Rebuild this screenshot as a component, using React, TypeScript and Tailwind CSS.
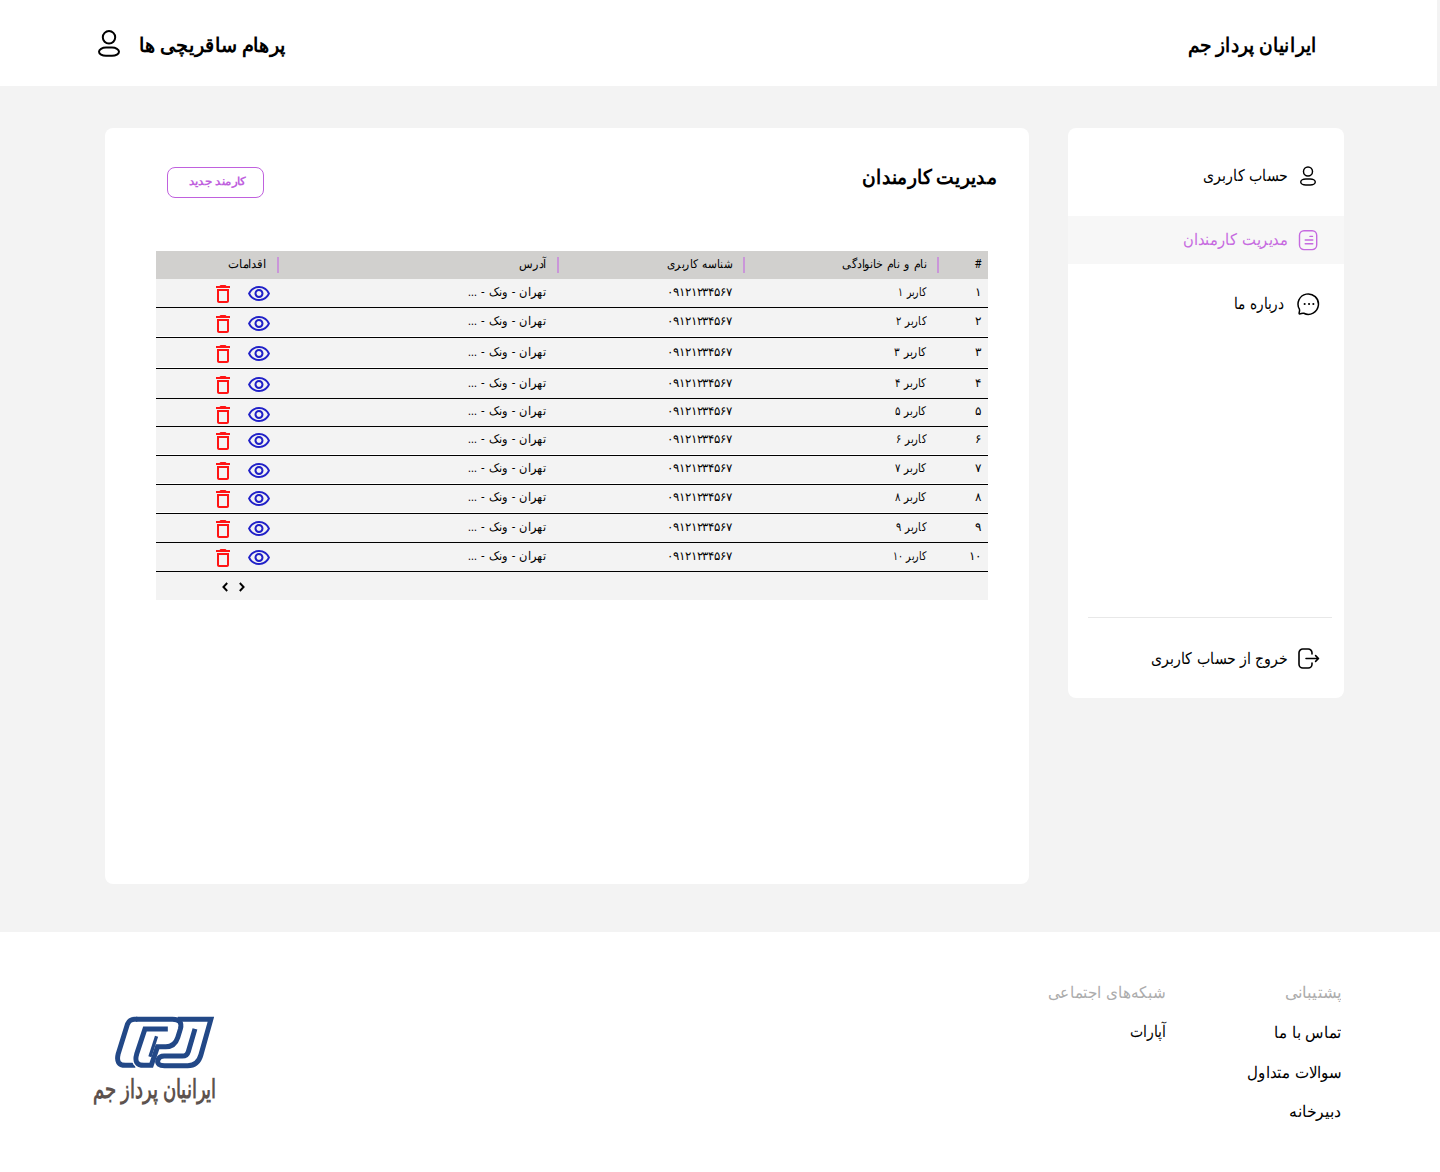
import { useLayoutEffect, useRef, useState, type ReactNode } from 'react';
import { MdDeleteOutline, MdOutlineVisibility } from 'react-icons/md';

/** A line of text that is condensed or widened to fill the width of its box. */
function Fit({ className, children }: { className: string; children: ReactNode }) {
  const outer = useRef<HTMLSpanElement>(null);
  const inner = useRef<HTMLSpanElement>(null);
  const [scale, setScale] = useState(1);
  useLayoutEffect(() => {
    if (outer.current && inner.current) {
      setScale(outer.current.offsetWidth / inner.current.getBoundingClientRect().width);
    }
  }, []);
  return (
    <span ref={outer} className={`block shrink-0 whitespace-nowrap ${className}`}>
      <span ref={inner} className="block w-max origin-right" style={{ transform: `scaleX(${scale})` }}>
        {children}
      </span>
    </span>
  );
}

function UserIcon({ className }: { className: string }) {
  return (
    <svg viewBox="0 0 22 27" fill="none" stroke="currentColor" strokeWidth="2" className={className}>
      <circle cx="11" cy="7.3" r="6.2" />
      <rect x="1" y="17.6" width="20" height="8.2" rx="7" ry="4.1" />
    </svg>
  );
}

function DocIcon() {
  return (
    <svg viewBox="0 0 20 21" fill="none" stroke="currentColor" strokeWidth="1.4" strokeLinecap="round" className="h-[21px] w-5">
      <rect x="1.5" y="0.8" width="17.2" height="18.8" rx="4.5" />
      <path d="M12 6.4h2.5M7.2 10h7.6M7.2 13.7h7.6" />
    </svg>
  );
}

function ChatIcon() {
  return (
    <svg viewBox="0 0 24 24" fill="none" stroke="currentColor" strokeWidth="1.5" strokeLinejoin="round" className="size-6">
      <path d="M2.4 17.2A10.2 10.2 0 1 1 6.8 21.3C5.3 20.6 3.9 22.2 2.4 21.9C1.3 21.6 3.2 19.2 2.4 17.2Z" />
      <path d="M7.6 12h.1M12 12h.1M16.3 12h.1" strokeWidth="2" strokeLinecap="round" />
    </svg>
  );
}

function ExitIcon() {
  return (
    <svg viewBox="0 0 22 22" fill="none" stroke="currentColor" strokeWidth="1.6" strokeLinecap="round" strokeLinejoin="round" className="size-[22px]">
      <path d="M14 6V4.8A3.8 3.8 0 0 0 10.2 1H4.8A3.8 3.8 0 0 0 1 4.8v11.4A3.8 3.8 0 0 0 4.8 20h5.4a3.8 3.8 0 0 0 3.8-3.8V15" />
      <path d="M8 10.5h12.4M17.6 7.6l2.9 2.9-2.9 2.9" />
    </svg>
  );
}

function Chevron({ d }: { d: string }) {
  return (
    <svg viewBox="0 0 6 10" fill="none" stroke="currentColor" strokeWidth="1.9" className="h-2.5 w-1.5">
      <path d={d} />
    </svg>
  );
}

function Logo() {
  return (
    <div className="flex w-[123px] flex-col">
      <svg viewBox="75 17 300 160" className="ml-[22px] h-[53px] w-[101px]" fill="none" stroke="#224887" strokeWidth="15">
        <path d="M150 27H132Q116 27 110 42L82 132Q74 166 104 166H134" />
        <path d="M140 27H246Q277 27 269 56L261 82Q253 108 226 108H201L182 166H160Q128 166 138 132L164 52H230" stroke="#fff" strokeWidth="24" />
        <path d="M314 56L294 124Q290 138 276 138H221Q206 138 202 150Q198 167 222 167H292Q323 167 332 134L362 27H262" />
        <path d="M136 27H246Q278 27 270 56L262 82Q253 110 226 110H201L182 166H160Q128 166 138 132L163 56H232" />
        <path d="M198 78L178 140" strokeWidth="10" />
      </svg>
      <div className="mt-0.5 h-9 text-[26px] leading-9 font-bold text-[#5d524e]">
        <Fit className="w-[123px]">ایرانیان پرداز جم</Fit>
      </div>
    </div>
  );
}

const rows = [
  { n: '۱', height: 'h-[29px]', text: 'mt-px', icons: 'mt-[3px]', name: 'w-7', gap: false },
  { n: '۲', height: 'h-[30px]', text: 'mt-px', icons: 'mt-1', name: 'w-[30px]', gap: true },
  { n: '۳', height: 'h-[31px]', text: 'mt-0.5', icons: 'mt-1', name: 'w-8', gap: true },
  { n: '۴', height: 'h-[30px]', text: 'mt-0.5', icons: 'mt-1', name: 'w-[31px]', gap: false },
  { n: '۵', height: 'h-7', text: 'mt-0', icons: 'mt-1', name: 'w-[31px]', gap: false },
  { n: '۶', height: 'h-[29px]', text: 'mt-0', icons: 'mt-0.5', name: 'w-[30px]', gap: true },
  { n: '۷', height: 'h-[29px]', text: 'mt-0', icons: 'mt-[3px]', name: 'w-[31px]', gap: true },
  { n: '۸', height: 'h-[29px]', text: 'mt-0', icons: 'mt-0.5', name: 'w-[31px]', gap: true },
  { n: '۹', height: 'h-[29px]', text: 'mt-px', icons: 'mt-[3px]', name: 'w-[30px]', gap: false },
  { n: '۱۰', height: 'h-[29px]', text: 'mt-px', icons: 'mt-[3px]', name: 'w-[33px]', gap: false },
];

const grid = 'grid grid-cols-[49px_194px_186px_280px_123px]';

function HeadCell({ children, width }: { children: string; width: string }) {
  return (
    <div className="flex">
      <span className="mt-1.5 h-4 w-0.5 shrink-0 bg-[#ca96d9]" />
      <Fit className={`mt-px mr-[11px] ${width}`}>{children}</Fit>
    </div>
  );
}

function Employees() {
  return (
    <main className="h-[756px] w-[924px] rounded-lg bg-white">
      <div className="flex h-[123px] items-start justify-between pr-8 pl-[62px]">
        <h1 className="mt-[33px] text-xl leading-8 font-bold">
          <Fit className="w-[135px]">مدیریت کارمندان</Fit>
        </h1>
        <button className="mt-[39px] flex h-[31px] w-[97px] rounded-lg border border-[#c061de] pr-[17px] text-[11px] leading-7 font-bold text-[#c061de]">
          <Fit className="w-[57px]">کارمند جدید</Fit>
        </button>
      </div>

      <div className="mr-[41px] w-[832px] text-xs leading-6 [word-spacing:1.5px]">
        <div className={`h-7 bg-[#d1d0ce] ${grid}`}>
          <Fit className="mt-px mr-[7px] w-[7px]">#</Fit>
          <HeadCell width="w-[84px]">نام و نام خانوادگی</HeadCell>
          <HeadCell width="w-[65px]">شناسه کاربری</HeadCell>
          <HeadCell width="w-[27px]">آدرس</HeadCell>
          <HeadCell width="w-[38px]">اقدامات</HeadCell>
        </div>
        {rows.map((r) => (
          <div key={r.n} className={`border-b border-black ${r.height}`}>
            <div className={`bg-[#f3f3f3] ${grid} ${r.gap ? 'h-[calc(100%-1px)]' : 'h-full'}`}>
              <span className={`mr-[7px] tracking-[-1.5px] ${r.text}`}>{r.n}</span>
              <Fit className={`mr-[13px] ${r.name} ${r.text}`}>کاربر {r.n}</Fit>
              <Fit className={`mr-[13px] w-[65px] ${r.text}`}>۰۹۱۲۱۲۳۴۵۶۷</Fit>
              <Fit className={`mr-[13px] w-[78px] ${r.text}`}>تهران - ونک - ...</Fit>
              <div className={`mr-2 flex h-6 gap-3 ${r.icons}`}>
                <MdOutlineVisibility className="-mt-[0.5px] size-6 shrink-0 text-[#2020c8]" />
                <MdDeleteOutline className="size-6 shrink-0 text-[#ff1414]" />
              </div>
            </div>
          </div>
        ))}
        <div dir="ltr" className="flex h-7 items-start gap-[11px] bg-[#f3f3f3] pt-2.5 pl-[66px]">
          <Chevron d="M5.2 1 1.4 5l3.8 4" />
          <Chevron d="M.8 1l3.8 4L.8 9" />
        </div>
      </div>
    </main>
  );
}

function Sidebar() {
  return (
    <aside className="h-[570px] w-[276px] rounded-lg bg-white text-base leading-6 [word-spacing:1px]">
      <div className="flex h-[88px] pt-9 pr-7">
        <UserIcon className="mt-0.5 h-5 w-4" />
        <Fit className="mr-3 w-[85px]">حساب کاربری</Fit>
      </div>
      <div className="flex h-12 bg-[#f7f7f7] pt-3 pr-[26px] text-[#c66ae0]">
        <div className="mt-0.5">
          <DocIcon />
        </div>
        <Fit className="mr-2.5 w-[105px]">مدیریت کارمندان</Fit>
      </div>
      <div className="flex pt-7 pr-[23px]">
        <ChatIcon />
        <Fit className="mr-[13px] w-[50px]">درباره ما</Fit>
      </div>
      <div className="mt-[301px] mr-3 ml-5 border-t border-[#e8e8e8]" />
      <div className="flex pt-[29px] pr-6">
        <div className="mt-[0.5px]">
          <ExitIcon />
        </div>
        <Fit className="mr-2.5 w-[137px]">خروج از حساب کاربری</Fit>
      </div>
    </aside>
  );
}

export default function App() {
  return (
    <div dir="rtl" className="h-[1172px] w-[1440px] overflow-hidden bg-[#f3f3f3] font-[Roboto,sans-serif] text-black">
      <header className="mr-[3px] flex h-[86px] items-start justify-between bg-white pr-[120px] pl-[98px] text-xl leading-8 font-bold">
        <Fit className="mt-[29px] w-[129px]">ایرانیان پرداز جم</Fit>
        <div className="flex">
          <Fit className="mt-[29px] w-[147px]">پرهام ساقریچی ها</Fit>
          <UserIcon className="mt-[29.5px] mr-[19px] h-[27px] w-[22px]" />
        </div>
      </header>

      <div className="flex h-[846px] gap-[39px] pt-[42px] pr-24">
        <Sidebar />
        <Employees />
      </div>

      <footer className="flex h-60 bg-white pt-[49px] pr-[99px] pl-[93px] text-base leading-6 [word-spacing:1px]">
        <div className="flex w-44 flex-col gap-4">
          <Fit className="w-14 text-[#acacac]">پشتیبانی</Fit>
          <Fit className="w-[67px]">تماس با ما</Fit>
          <Fit className="w-[94px]">سوالات متداول</Fit>
          <Fit className="-mt-px w-[52px]">دبیرخانه</Fit>
        </div>
        <div className="flex flex-col gap-[15px]">
          <Fit className="w-[117px] text-[#acacac]">شبکه‌های اجتماعی</Fit>
          <Fit className="w-[35px]">آپارات</Fit>
        </div>
        <div className="mt-[35px] mr-auto">
          <Logo />
        </div>
      </footer>
    </div>
  );
}
